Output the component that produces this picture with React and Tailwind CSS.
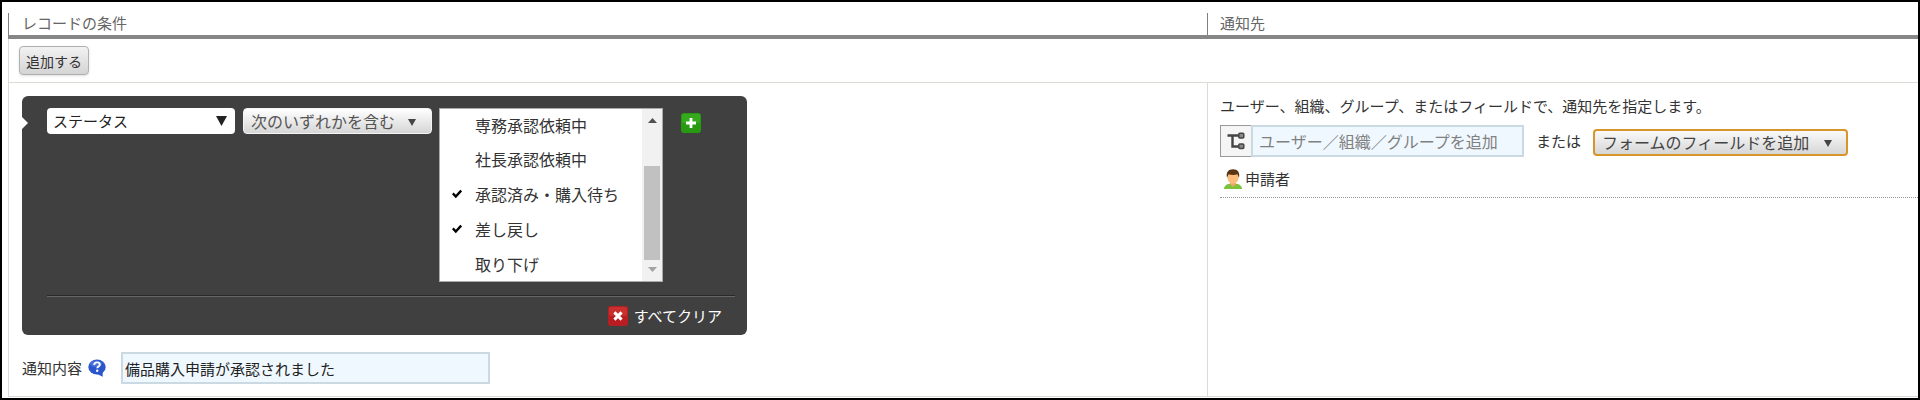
import { useState } from "react";

const statusOptions = [
  "専務承認依頼中",
  "社長承認依頼中",
  "承認済み・購入待ち",
  "差し戻し",
  "取り下げ",
];

const Triangle = ({ className }) => (
  <svg
    viewBox="0 0 10 8"
    preserveAspectRatio="none"
    className={className}
    fill="currentColor"
    aria-hidden="true"
  >
    <path d="M0 0h10L5 8z" />
  </svg>
);

const CheckIcon = () => (
  <svg viewBox="0 0 10 10" className="w-[10px] h-[10px]" fill="none" stroke="#000" strokeWidth="2.4">
    <path d="M0.8 4.4l3 3.2L9.2 1.6" />
  </svg>
);

const PlusIcon = () => (
  <svg viewBox="0 0 20 20" className="w-5 h-5">
    <rect width="20" height="20" rx="3" fill="#289a12" />
    <rect x="1" y="1" width="18" height="9" rx="2" fill="#35aa1d" />
    <path d="M10 5v10M5 10h10" stroke="#fff" strokeWidth="2.8" />
  </svg>
);

const ClearIcon = () => (
  <svg viewBox="0 0 20 20" className="w-5 h-5">
    <rect width="20" height="20" rx="3" fill="#b81d22" />
    <rect x="1" y="1" width="18" height="9" rx="2" fill="#c8302f" />
    <path d="M6.4 6.4l7.2 7.2M13.6 6.4l-7.2 7.2" stroke="#fff" strokeWidth="3" />
  </svg>
);

const HelpIcon = () => (
  <svg viewBox="0 0 18 18" className="w-[18px] h-[18px]">
    <ellipse cx="9" cy="8" rx="8.7" ry="7.6" fill="#2a55cc" />
    <path d="M8 14.5l6.8 3.3-0.3-5.5z" fill="#2a55cc" />
    <ellipse cx="8" cy="4.8" rx="6" ry="3.4" fill="#5b82e6" opacity="0.6" />
    <path
      d="M6.2 6c0-1.7 1.2-2.6 2.8-2.6s2.8 0.9 2.8 2.3c0 1.7-2.5 1.700-2.5 3.5"
      stroke="#fff"
      strokeWidth="1.9"
      fill="none"
    />
    <circle cx="9.2" cy="11.8" r="1.2" fill="#fff" />
  </svg>
);

const OrgIcon = () => (
  <svg viewBox="0 0 18 18" className="w-[18px] h-[18px]" fill="none" stroke="#444">
    <path d="M0.5 3.5h11M5.5 3.5v11h6" strokeWidth="2.4" />
    <rect x="11.8" y="1.3" width="5" height="4.6" rx="1" fill="#888" strokeWidth="1.5" />
    <rect x="11.8" y="12" width="5" height="4.6" rx="1" fill="#888" strokeWidth="1.5" />
  </svg>
);

const UserIcon = () => (
  <svg viewBox="0 0 18 20" className="w-[18px] h-5">
    <path d="M0 20c0-3 2.5-4.8 5.5-5.3h7c3 0.5 5.5 2.3 5.5 5.3z" fill="#7dc23c" />
    <path d="M6.2 12h5.6v3.5L9 18l-2.8-2.5z" fill="#f0a660" />
    <ellipse cx="9" cy="8.5" rx="5.6" ry="6.2" fill="#fbbc7c" />
    <path
      d="M3 8.5C1.8 3.5 4.3 0.3 9 0.3s7.2 3.2 6 8.2c-0.8-0.8-1-2.3-1.5-3.2-2.5 0.9-6.5 0.9-9 0-0.5 0.9-0.7 2.4-1.5 3.2z"
      fill="#5a3413"
    />
  </svg>
);

function App() {
  const [checked, setChecked] = useState(["承認済み・購入待ち", "差し戻し"]);
  const [message, setMessage] = useState("備品購入申請が承認されました");

  const toggle = (name) => {
    setChecked((prev) =>
      prev.includes(name) ? prev.filter((n) => n !== name) : [...prev, name]
    );
  };

  return (
    <div className="min-h-screen border-2 border-black bg-white pt-[11px] pl-[6px] text-[15px] leading-6 text-[#333] font-['Noto_Sans_CJK_JP',sans-serif]">
      <table className="w-full table-fixed border-separate border-spacing-0 text-left">
        <thead>
          <tr>
            <th className="w-[1199px] p-0 border-b-4 border-[#868686] font-normal">
              <div className="h-[22px] pl-[13px] border-l border-[#808080] text-[#666] leading-[20px]">
                レコードの条件
              </div>
            </th>
            <th className="p-0 border-b-4 border-[#868686] font-normal">
              <div className="h-[22px] pl-3 border-l border-[#808080] text-[#666] leading-[20px]">
                通知先
              </div>
            </th>
          </tr>
        </thead>
        <tbody>
          <tr>
            <td
              colSpan={2}
              className="px-[10px] py-[7px] border-l border-b border-[#dedad6]"
            >
              <button
                type="button"
                className="block h-[29px] px-[6px] rounded border border-[#b0b0b0] bg-linear-to-b from-[#f2f2f2] to-[#d4d4d4] text-[14px] leading-[24px] shadow-sm"
              >
                追加する
              </button>
            </td>
          </tr>
          <tr>
            <td className="px-[13px] pt-[13px] pb-3 align-top border-l border-b border-[#dedad6]">
              <div className="relative w-[725px] px-[25px] pt-3 pb-[9px] rounded-md bg-[#404040]">
                <svg
                  viewBox="0 0 6 12"
                  className="absolute left-0 top-[21px] w-[6px] h-3"
                  fill="#fff"
                >
                  <path d="M0 0l6 6-6 6z" />
                </svg>
                <div className="flex items-start">
                  <div className="relative">
                    <select
                      aria-label="フィールド"
                      className="block w-[188px] h-[26px] pl-[6px] appearance-none rounded-sm bg-white text-[#222] leading-[24px]"
                    >
                      <option>ステータス</option>
                    </select>
                    <Triangle className="absolute right-2 top-2 w-[11px] h-[10px] text-[#222] pointer-events-none" />
                  </div>
                  <div className="relative ml-2">
                    <select
                      aria-label="条件"
                      className="block w-[189px] h-[26px] pl-[7px] appearance-none rounded border border-[#f4f4f4] bg-linear-to-b from-white to-[#d6d6d6] text-[16px] text-[#555] leading-[24px]"
                    >
                      <option>次のいずれかを含む</option>
                    </select>
                    <Triangle className="absolute right-4 top-[11px] w-2 h-[7px] text-[#444] pointer-events-none" />
                  </div>
                  <div className="flex w-[224px] ml-[7px] border border-[#aaa] bg-white">
                    <div className="flex-1">
                      {statusOptions.map((name) => (
                        <label
                          key={name}
                          className="flex items-center h-[35px] first:h-[32px] pl-3 text-[16px] text-[#333]"
                        >
                          <input
                            type="checkbox"
                            className="sr-only"
                            checked={checked.includes(name)}
                            onChange={() => toggle(name)}
                          />
                          <span className="w-[23px]">
                            {checked.includes(name) && <CheckIcon />}
                          </span>
                          {name}
                        </label>
                      ))}
                    </div>
                    <div className="flex flex-col items-center w-5 py-[9px] bg-[#f1f1f1]">
                      <Triangle className="w-[9px] h-[5px] rotate-180 text-[#505050]" />
                      <div className="w-4 h-[94px] mt-auto mb-[7px] bg-[#c1c1c1]" />
                      <Triangle className="w-[9px] h-[5px] text-[#a3a3a3]" />
                    </div>
                  </div>
                  <button type="button" aria-label="追加" className="ml-[18px] mt-[5px]">
                    <PlusIcon />
                  </button>
                </div>
                <div className="-mr-[13px] mt-[13px] border-t border-b border-t-[#2a2a2a] border-b-[#666]" />
                <div className="flex justify-end mt-[9px]">
                  <button
                    type="button"
                    className="flex items-center gap-[6px] h-5 text-white"
                  >
                    <ClearIcon />
                    すべてクリア
                  </button>
                </div>
              </div>

              <div className="flex items-center mt-[17px]">
                <label htmlFor="message">通知内容</label>
                <a href="#help" aria-label="ヘルプ" className="ml-[6px]">
                  <HelpIcon />
                </a>
                <input
                  id="message"
                  type="text"
                  value={message}
                  onChange={(e) => setMessage(e.target.value)}
                  className="w-[369px] h-8 ml-[15px] px-[2px] border-2 border-[#cbd9e3] bg-[#f0f8ff] text-[#222]"
                />
              </div>
            </td>
            <td className="pl-3 pt-[11px] align-top border-l border-b border-[#dedad6]">
              <p>ユーザー、組織、グループ、またはフィールドで、通知先を指定します。</p>
              <div className="flex items-center mt-[7px]">
                <button
                  type="button"
                  aria-label="組織から選択"
                  className="flex items-center justify-center w-[31px] h-8 border border-r-0 border-[#999] bg-[#f5f5f5]"
                >
                  <OrgIcon />
                </button>
                <input
                  type="text"
                  aria-label="ユーザー／組織／グループを追加"
                  placeholder="ユーザー／組織／グループを追加"
                  className="w-[273px] h-8 px-[6px] border-2 border-[#cbd9e3] bg-[#f0f8ff] text-[16px] placeholder:text-[#808080]"
                />
                <span className="ml-3">または</span>
                <div className="relative ml-3 mt-[2px]">
                  <select
                    aria-label="フォームのフィールド"
                    className="block w-[255px] h-[27px] pl-[7px] appearance-none rounded border-2 border-[#d8952a] bg-linear-to-b from-[#fafafa] to-[#d6d6d6] text-[16px] text-[#444] leading-[23px]"
                  >
                    <option>フォームのフィールドを追加</option>
                  </select>
                  <Triangle className="absolute right-4 top-[11px] w-2 h-[7px] text-[#444] pointer-events-none" />
                </div>
              </div>
              <div className="flex items-center gap-[3px] mt-[10px] pl-1 pb-[6px] border-b border-dotted border-[#999]">
                <UserIcon />
                申請者
              </div>
            </td>
          </tr>
        </tbody>
      </table>
    </div>
  );
}

export default App;
